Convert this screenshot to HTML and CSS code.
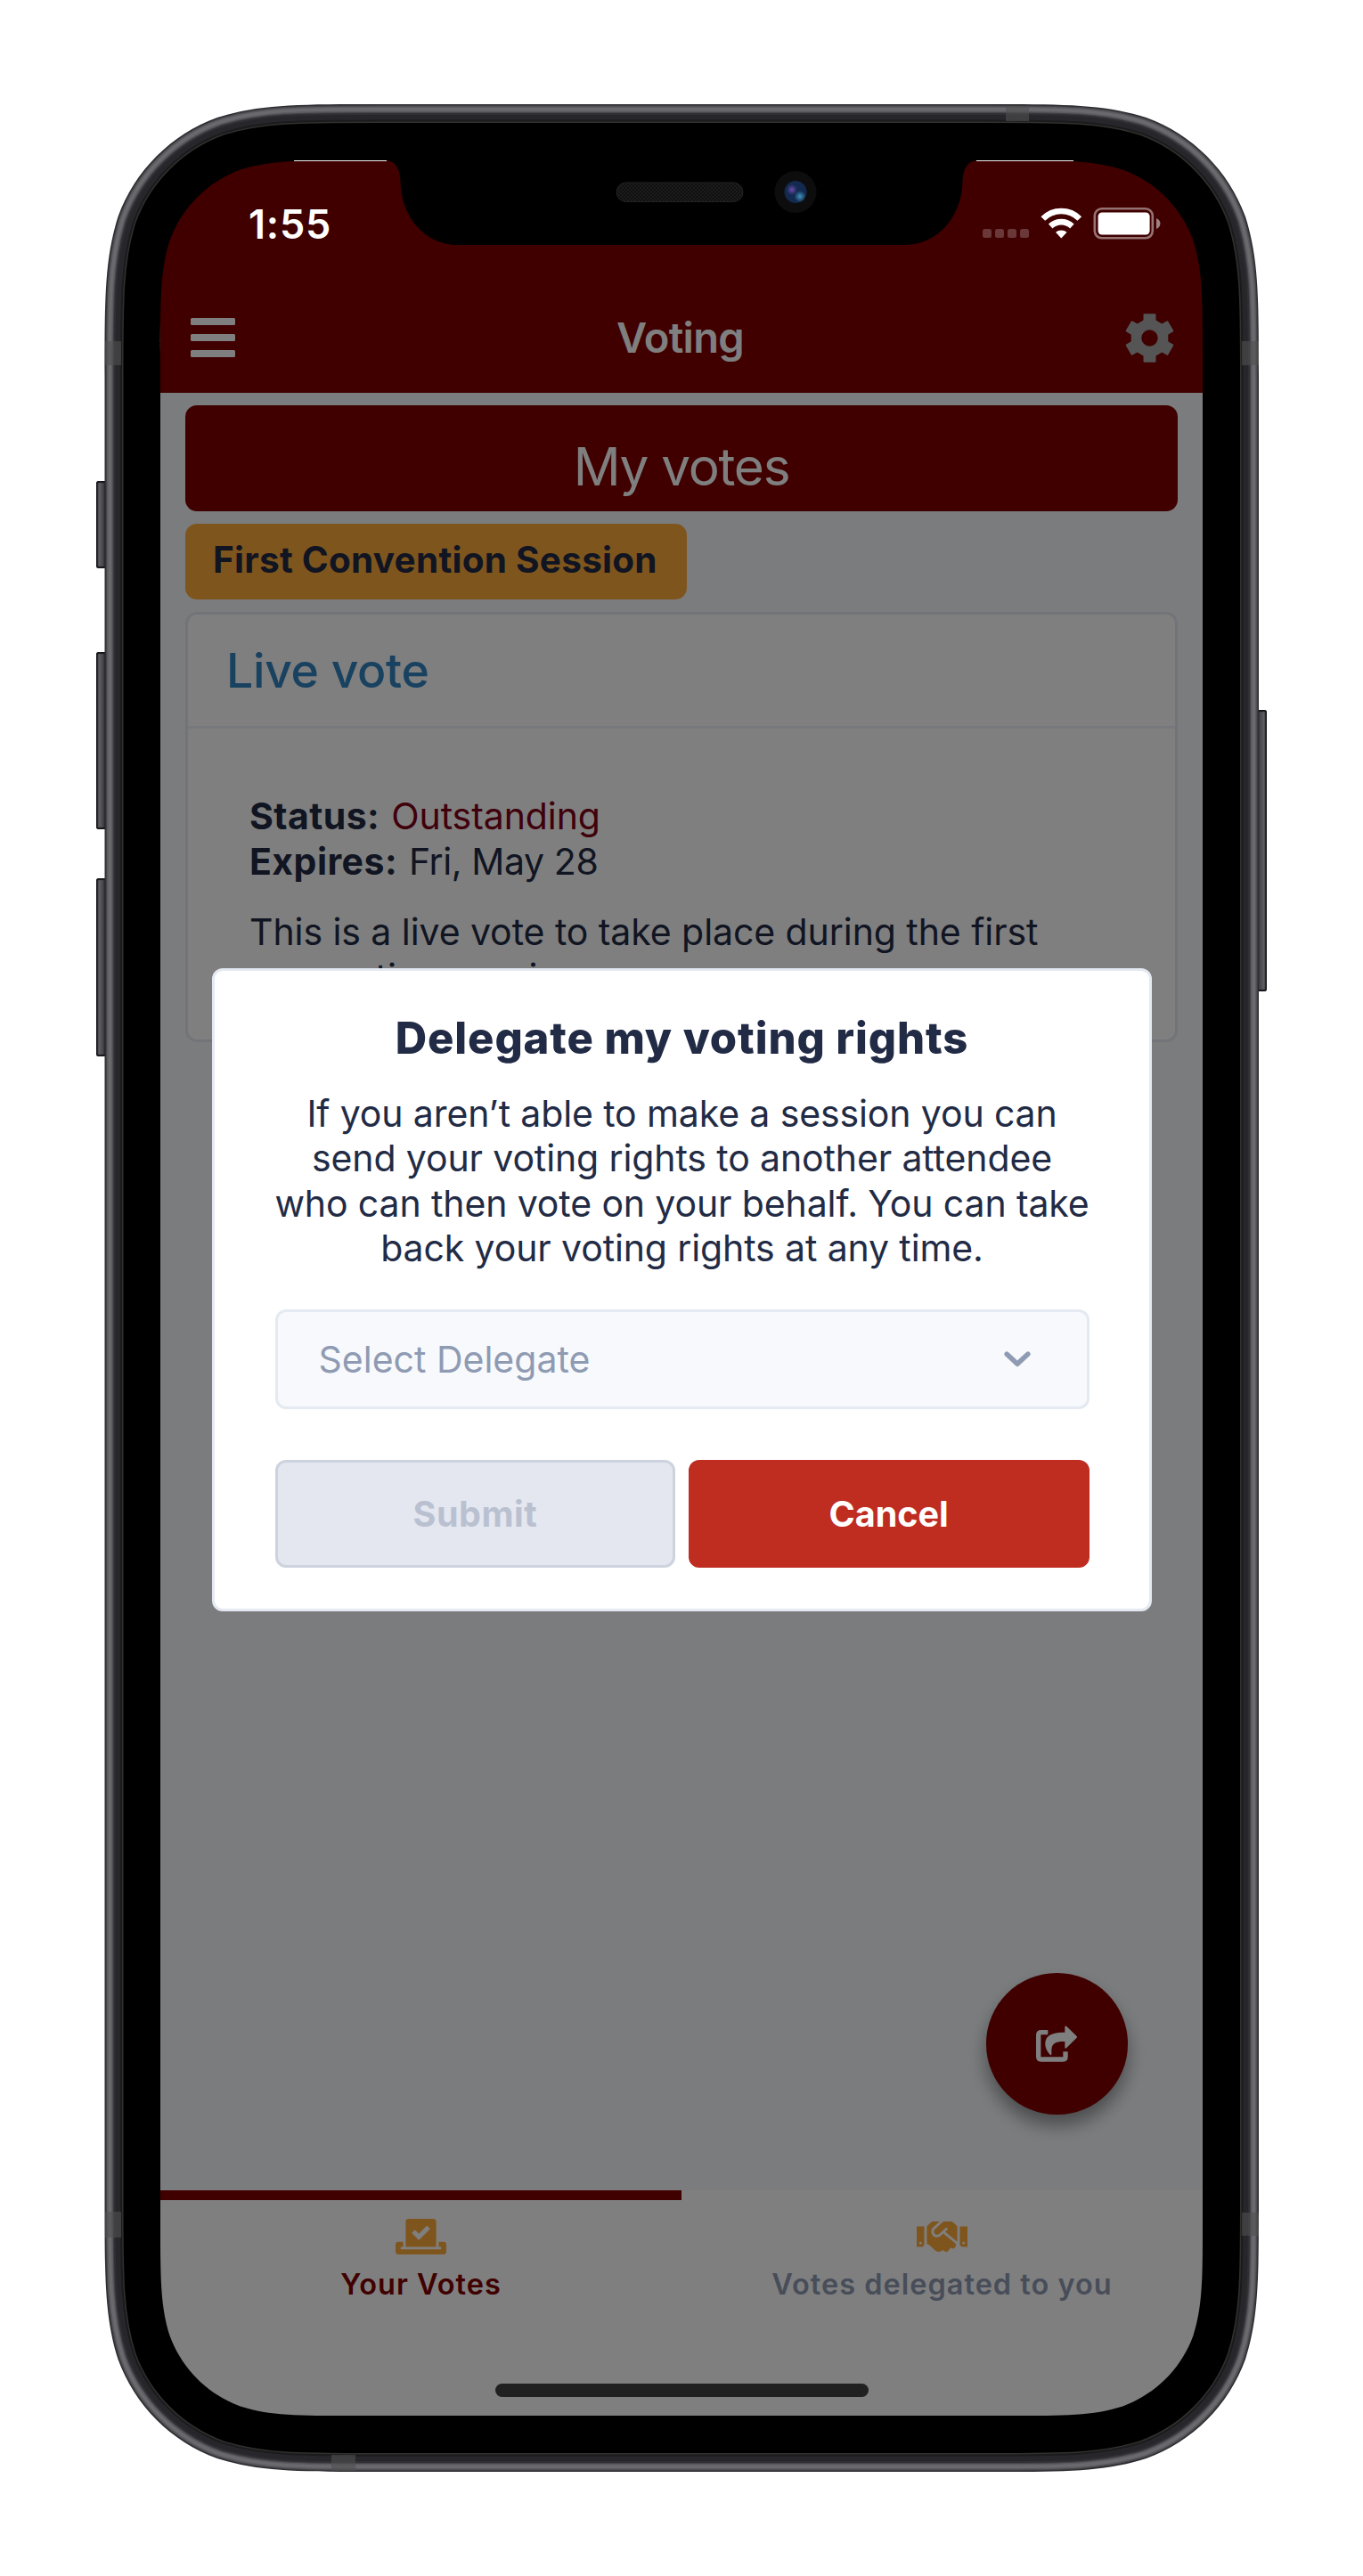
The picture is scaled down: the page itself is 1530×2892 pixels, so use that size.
FILE: index.html
```html
<!DOCTYPE html>
<html lang="en">
<head>
<meta charset="utf-8">
<title>Voting</title>
<link rel="stylesheet" href="styles.css">
</head>
<body>
<div class="device">
  <main class="screen">
    <header class="header">
      <div class="navbar">
        <div class="menu"><i></i><i></i><i></i></div>
        <h1 class="nav-title">Voting</h1>
        <svg class="gear" viewBox="-27.5 -27.5 55 55" width="55" height="55">
          <defs><mask id="hole"><rect x="-28" y="-28" width="56" height="56" fill="#fff"/><circle r="9.2" fill="#000"/></mask></defs>
          <g mask="url(#hole)">
            <path d="M0-24 20.8-12V12L0 24-20.8 12V-12Z"/>
            <rect x="-7" y="-27.3" width="14" height="54.6" rx="1.2"/>
            <rect x="-7" y="-27.3" width="14" height="54.6" rx="1.2" transform="rotate(60)"/>
            <rect x="-7" y="-27.3" width="14" height="54.6" rx="1.2" transform="rotate(120)"/>
          </g>
        </svg>
      </div>
    </header>
    <section class="content">
      <div class="banner">My votes</div>
      <div class="chip">First Convention Session</div>
      <article class="card">
        <h2 class="card-title">Live vote</h2>
        <div class="card-body">
          <p><b>Status:</b> <span class="outstanding">Outstanding</span></p>
          <p><b>Expires:</b> <span class="date">Fri, May 28</span></p>
          <p class="desc">This is a live vote to take place during the first<br>convention session.</p>
        </div>
      </article>
    </section>
    <nav class="tabs">
      <div class="tab active">
        <svg viewBox="0 32 640 448" width="57" height="40"><path d="M608 320h-64v64h22.4c5.3 0 9.6 3.6 9.6 8v16c0 4.4-4.3 8-9.6 8H73.6c-5.3 0-9.6-3.6-9.6-8v-16c0-4.4 4.3-8 9.6-8H96v-64H32c-17.7 0-32 14.3-32 32v96c0 17.7 14.3 32 32 32h576c17.7 0 32-14.3 32-32v-96c0-17.7-14.3-32-32-32zm-96 64V64.3c0-17.9-14.5-32.3-32.3-32.3H160.4C142.5 32 128 46.5 128 64.3V384h384zM211.2 202l25.5-25.3c4.2-4.2 11-4.2 15.2.1l41.3 41.6 95.2-94.4c4.2-4.2 11-4.2 15.2.1l25.3 25.5c4.2 4.2 4.2 11-.1 15.2L300.5 292c-4.2 4.2-11 4.2-15.2-.1l-74.1-74.7c-4.3-4.2-4.2-11 0-15.2z"/></svg>
        <span>Your Votes</span>
      </div>
      <div class="tab">
        <svg viewBox="0 32 640 448" width="57" height="40"><path d="M434.7 64h-85.9c-8 0-15.7 3-21.6 8.4l-98.3 90c-.1.1-.2.3-.3.4-16.6 15.6-16.3 40.5-2.1 56 12.7 13.9 39.4 17.6 56.1 2.7.1-.1.3-.1.4-.2l79.9-73.2c6.5-5.9 16.7-5.5 22.6 1 6 6.5 5.5 16.6-1 22.6l-26.1 23.9L504 313.8c2.9 2.4 5.5 5 7.9 7.7V128l-54.6-54.6c-5.9-6-14.1-9.4-22.6-9.4zM544 128.2v223.9c0 17.7 14.3 32 32 32h64V128.2h-96zm48 223.9c-8.8 0-16-7.2-16-16s7.2-16 16-16 16 7.2 16 16-7.2 16-16 16zM0 384h64c17.7 0 32-14.3 32-32V128.2H0V384zm48-63.9c8.8 0 16 7.2 16 16s-7.2 16-16 16-16-7.2-16-16c0-8.9 7.2-16 16-16zm435.9 18.6L334.6 217.5l-30 27.5c-29.7 27.1-75.2 24.5-101.7-4.4-26.9-29.4-24.8-74.9 4.4-101.7L289.1 64h-83.8c-8.5 0-16.6 3.4-22.6 9.4L128 128v223.9h18.3l90.5 81.9c27.4 22.3 67.7 18.1 90-9.3l.2-.2 17.9 15.5c15.9 13 39.4 10.5 52.3-5.4l31.4-38.6 5.4 4.4c13.7 11.1 33.9 9.1 45-4.7l9.5-11.7c11.2-13.8 9.1-33.9-4.6-45.1z"/></svg>
        <span>Votes delegated to you</span>
      </div>
    </nav>
    <div class="fab">
      <svg viewBox="0 0 140 124" width="46.7" height="41.3"><path d="M40 23H17Q8 23 8 32V105Q8 114 17 114H91Q99 114 99 106V88" fill="none" stroke="currentColor" stroke-width="16"/><path d="M97 5Q97-1 103 3L137 36Q139 38 137 41L102 76Q97 79 97 74V54C70 53 52 58 52 84V96Q51 102 47 98C33 84 28 66 32 52 37 30 60 23 97 23Z" fill="currentColor" stroke="#800000" stroke-width="8" paint-order="stroke"/></svg>
    </div>
    <div class="overlay">
      <section class="modal">
        <h2 class="modal-title">Delegate my voting rights</h2>
        <p class="modal-text">If you aren’t able to make a session you can<br>send your voting rights to another attendee<br>who can then vote on your behalf. You can take<br>back your voting rights at any time.</p>
        <div class="select"><span>Select Delegate</span><svg viewBox="0 0 30 18" width="30" height="18"><path d="M3.200 3.200 15 14.200 26.800 3.200" fill="none" stroke="currentColor" stroke-width="5.600" stroke-linecap="round" stroke-linejoin="round"/></svg></div>
        <div class="actions">
          <button class="btn submit" disabled>Submit</button>
          <button class="btn cancel">Cancel</button>
        </div>
      </section>
    </div>
    <div class="status">
      <span class="time">1:55</span>
      <svg viewBox="0 0 200 36" width="200" height="36">
        <g fill="#fff" fill-opacity=".22"><rect x="0" y="24" width="10" height="10" rx="2.5"/><rect x="14" y="24" width="10" height="10" rx="2.5"/><rect x="28" y="24" width="10" height="10" rx="2.5"/><rect x="42" y="24" width="10" height="10" rx="2.5"/></g>
        <g fill="none" stroke="#fff" stroke-width="6.6"><path d="M67.8 12.5A29 29 0 0 1 108.8 12.5"/><path d="M76.2 21A17.5 17.5 0 0 1 100.4 21"/></g>
        <path d="M88.3 34.6 82 27.8A9.6 9.6 0 0 1 94.6 27.8Z" fill="#fff"/>
        <rect x="125.8" y="1.3" width="65" height="33" rx="8" fill="none" stroke="#fff" stroke-opacity=".45" stroke-width="2.6"/>
        <rect x="129.6" y="5.5" width="58" height="25" rx="4.5" fill="#fff"/>
        <path d="M195 12Q199.5 14 199.5 18T195 24Z" fill="#fff" fill-opacity=".5"/>
      </svg>
    </div>
    <div class="home"></div>
  </main>
  <i class="key mute"></i><i class="key up"></i><i class="key down"></i><i class="key power"></i>
  <svg class="frame" viewBox="0 0 1530 2892" width="1530" height="2892">
    <defs>
      <path id="edge" d="M117.5 422.7c0-88 0-132 15-179.4c18.8-51.7 59.6-92.5 111.3-111.3c47.4-15 91.4-15 179.4-15H1107.3c88 0 132 0 179.4 15c51.7 18.8 92.5 59.6 111.3 111.3c15 47.4 15 91.4 15 179.4V2469.3c0 88 0 132-15 179.4c-18.8 51.7-59.6 92.5-111.3 111.3c-47.4 15-91.4 15-179.4 15H423.2c-88 0-132 0-179.4-15c-51.7-18.8-92.5-59.6-111.3-111.3c-15-47.4-15-91.4-15-179.4z"/>
      <path id="opening" d="M180 397.1c0-62.5 0-93.8 10.600-127.4c13.4-36.8 42.3-65.7 79.1-79.1c33.6-10.6 64.9-10.6 127.4-10.600H432C443 180 449 188 449.5 203C450 245 478 275 514 275H1015C1051 275 1080 245 1080.5 203C1081 188 1087 180 1098 180H1132.9c62.5 0 93.800 0 127.4 10.600c36.8 13.4 65.7 42.3 79.1 79.1c10.600 33.600 10.600 64.900 10.600 127.4V2494.900c0 62.500 0 93.800-10.600 127.400c-13.400 36.800-42.300 65.700-79.100 79.100c-33.600 10.600-64.900 10.600-127.400 10.600H397.100c-62.500 0-93.800 0-127.400-10.600c-36.800-13.400-65.700-42.300-79.100-79.100c-10.600-33.600-10.600-64.900-10.600-127.400z"/>
      <clipPath id="outer"><use href="#edge"/></clipPath>
      <mask id="window"><rect width="1530" height="2892" fill="#fff"/><use href="#opening" fill="#000"/></mask>
      <radialGradient id="violet"><stop offset="0" stop-color="#6a4aa8"/><stop offset="1" stop-color="#6a4aa8" stop-opacity="0"/></radialGradient>
      <radialGradient id="cyan"><stop offset="0" stop-color="#3f93b8"/><stop offset="1" stop-color="#3f93b8" stop-opacity="0"/></radialGradient>
      <pattern id="mesh" width="4" height="4" patternUnits="userSpaceOnUse"><rect width="4" height="4" fill="#101010"/><path d="M0 0h2v2H0zM2 2h2v2H2z" fill="#1c1c1c"/></pattern>
    </defs>
    <g clip-path="url(#outer)" mask="url(#window)">
      <use href="#edge" fill="#000"/>
      <g fill="none">
        <use href="#edge" stroke="#30302d" stroke-width="42"/>
        <use href="#edge" stroke="#1b1b1e" stroke-width="39"/>
        <use href="#edge" stroke="#26262b" stroke-width="35"/>
        <use href="#edge" stroke="#2f2f34" stroke-width="24"/>
        <use href="#edge" stroke="#434348" stroke-width="20"/>
        <use href="#edge" stroke="#5a5a5f" stroke-width="18"/>
        <use href="#edge" stroke="#69696e" stroke-width="15"/>
        <use href="#edge" stroke="#5a5a5f" stroke-width="8"/>
        <use href="#edge" stroke="#434348" stroke-width="5"/>
        <use href="#edge" stroke="#2c2c30" stroke-width="2.5"/>
      </g>
      <path d="M1129 119h26v17h-26zM372 2756h27v18h-27zM118 383h18v27h-18zM1394 383h19v27h-19zM118 2483h18v29h-18zM1394 2484h19v26h-19z" fill="#505050" fill-opacity=".6"/>
    </g>
    <path d="M330 180.5H434M1096 180.5H1205" stroke="#eee"/>
    <rect x="692" y="205" width="142" height="21.5" rx="10.7" fill="url(#mesh)" stroke="#222"/>
    <circle cx="893" cy="215.5" r="23.5" fill="#0d0d0e"/>
    <circle cx="893" cy="215.5" r="12.5" fill="#132a50"/>
    <circle cx="889" cy="213" r="6" fill="url(#violet)"/>
    <circle cx="898" cy="220.5" r="6.500" fill="url(#cyan)"/>
  </svg>
</div>
</body>
</html>
```
FILE: styles.css
```css
* { box-sizing: border-box; }
body { margin: 0; background: #fff; font-family: Inter, "Liberation Sans", sans-serif; color: #222b45; }
h1, h2, p { margin: 0; font-weight: inherit; }
.device { position: relative; width: 1530px; height: 2892px; padding: 180px; overflow: hidden; }
.frame { position: absolute; inset: 0; pointer-events: none; }

/* Hardware keys on the sides of the frame */
.key { position: absolute; left: 108px; width: 10px; border-radius: 3px 0 0 3px; background: linear-gradient(90deg, #17171a 10%, #5f5f64 30%, #4a4a4f 70%, #2c2c30); box-shadow: inset 0 2px 1px #17171a, inset 0 -2px 1px #17171a; }
.mute { top: 540px; height: 98px; }
.up { top: 732px; height: 199px; }
.down { top: 986px; height: 200px; }
.power { left: auto; right: 108px; top: 797px; height: 316px; transform: scaleX(-1); }

.screen { position: relative; width: 1170px; height: 2532px; display: flex; flex-direction: column; background: #f7f9fc; }
.header { background: #800000; height: 261px; padding: 144px 32px 7px 34px; }
.navbar { display: flex; align-items: center; justify-content: space-between; height: 110px; color: #fff; }
.menu { display: flex; flex-direction: column; gap: 9.5px; width: 50px; }
.menu i { height: 8.5px; border-radius: 1.5px; background: #fff; }
.nav-title { font-size: 47px; font-weight: 600; line-height: 60px; letter-spacing: -.7px; }
.gear { fill: #aaa; }

.content { flex: 1; padding: 14px 28px; }
.banner { height: 118.5px; padding-top: 19px; border-radius: 13px; background: #800000; color: #fff; text-align: center; font-size: 58.5px; line-height: 99.5px; letter-spacing: -1.3px; }
.chip { width: 563px; height: 84.5px; margin-top: 14.5px; padding-left: 31px; border-radius: 13px; background: #ffab3d; font-size: 40.5px; font-weight: 700; line-height: 82px; letter-spacing: .24px; white-space: nowrap; }
.card { height: 482.5px; margin-top: 14.5px; border: 3px solid #e4e9f2; border-radius: 13px; background: #fff; }
.card-title { padding: 0 43px; border-bottom: 3px solid #edf1f7; color: #3385c0; font-size: 53.5px; font-weight: 550; line-height: 125px; letter-spacing: -.3px; }
.card-body { padding: 73px 69px; font-size: 41px; line-height: 51px; letter-spacing: -.07px; white-space: nowrap; }
.card-body b { font-weight: 700; letter-spacing: .45px; margin-right: 1.5px; }
.outstanding { color: #800016; }
.date { letter-spacing: -.4px; }
.desc { margin-top: 27.5px; }

.tabs { display: flex; height: 253.5px; background: #fff; }
.tab { flex: 1; display: flex; flex-direction: column; align-items: center; gap: 14.5px; padding-top: 21px; border-top: 11.5px solid #fff; color: #8f9bb3; font-size: 32.5px; font-weight: 600; line-height: 40px; letter-spacing: 1px; }
.tab.active { border-color: #800000; color: #800000; }
.tab svg { fill: #ffab3d; }

.fab { position: absolute; left: 927px; top: 2035px; width: 158.5px; height: 158.5px; display: flex; align-items: center; justify-content: center; border-radius: 50%; background: #800000; color: #fff; box-shadow: 0 12px 20px rgba(0, 0, 0, .4); }

.overlay { position: absolute; inset: 0; display: flex; align-items: flex-start; justify-content: center; padding: 906.5px 0 0 1px; background: rgba(0, 0, 0, .5); }
.modal { width: 1055px; height: 722px; padding: 46.5px 67.5px 0; border: 3px solid #e4e9f2; border-radius: 12px; background: #fff; text-align: center; }
.modal-title { font-size: 49px; font-weight: 800; line-height: 60px; letter-spacing: .9px; }
.modal-text { margin: 28.5px -9px 0; font-size: 41px; line-height: 50.6px; letter-spacing: -.12px; white-space: nowrap; }
.select { display: flex; align-items: center; justify-content: space-between; height: 112px; margin-top: 43px; padding: 0 63px 0 46px; border: 3px solid #e4e9f2; border-radius: 12px; background: #f7f9fc; color: #8f9bb3; font-size: 41px; line-height: 50px; }
.actions { display: flex; gap: 14.5px; margin-top: 57px; }
.btn { flex: 1; height: 121.5px; padding: 0; border: 3px solid; border-radius: 12px; font: 700 39.5px/50px Inter, "Liberation Sans", sans-serif; }
.submit { border-color: #cdd3de; background: #e4e7ef; color: #b9c1d1; letter-spacing: .5px; }
.cancel { border-color: #bf2c20; background: #bf2c20; color: #fff; }

.status { position: absolute; inset: 0 0 auto; display: flex; align-items: center; justify-content: space-between; height: 144px; padding: 0 47.5px 0 99px; color: #fff; }
.status svg { margin-top: -3px; }
.time { font-size: 45px; font-weight: 600; line-height: 60px; letter-spacing: .8px; }
.home { position: absolute; left: 375.5px; bottom: 21px; width: 419px; height: 15px; border-radius: 8px; background: #212121; }
```
